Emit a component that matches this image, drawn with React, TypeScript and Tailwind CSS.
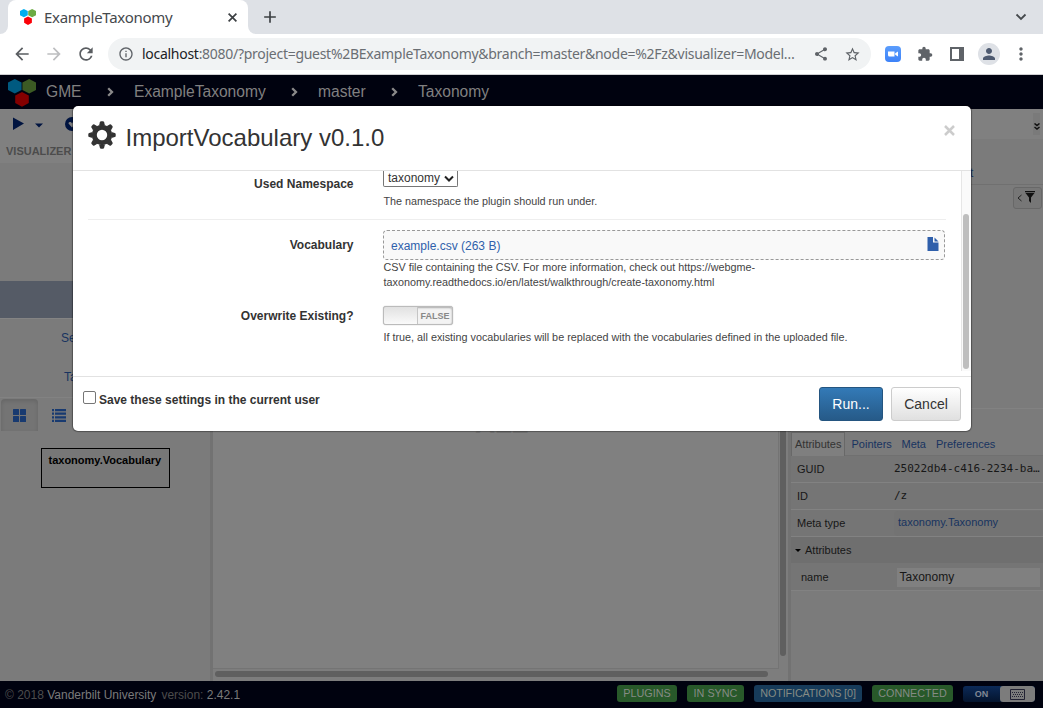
import React from "react";
import {
  MdAdd,
  MdArrowBack,
  MdArrowForward,
  MdExtension,
  MdInfoOutline,
  MdMoreVert,
  MdPerson,
  MdRefresh,
  MdShare,
  MdStarBorder,
  MdVideocam,
} from "react-icons/md";

const sans = "font-['Liberation_Sans',Arial,sans-serif]";
const noto = "font-['Noto_Sans',sans-serif]";

function Logo({ className, blue, green, red }: { className: string; blue: string; green: string; red: string }) {
  return (
    <svg className={className} viewBox="0 0 28 28">
      <path fill={blue} d="M6.800 0l6.800 3.500v7.500l-6.800 3.500L0 11V3.500z" />
      <path fill={green} d="M21.200 0L28 3.500v7.500l-6.800 3.500L14.400 11V3.500z" />
      <path fill={red} d="M14 13l6.800 3.500v7.500L14 27.800 7.200 24v-7.500z" />
    </svg>
  );
}

function BrowserChrome() {
  return (
    <div className={`${noto} shrink-0`}>
      <div className="flex h-[34px] bg-[#dee1e6]">
        <div className="flex w-2 items-end bg-white">
          <div className="h-[34px] w-2 rounded-br-lg bg-[#dee1e6]" />
        </div>
        <div className="bg-[#dee1e6]">
          <div className="flex h-[34px] w-[240px] items-center rounded-t-lg bg-white pl-3">
            <Logo className="size-4" blue="#00aeef" green="#6cab43" red="#fb0007" />
            <span className="ml-2 w-[183px] text-[15px] leading-5 tracking-[-0.280px] text-[#45494d]">ExampleTaxonomy</span>
            <svg className="ml-[0.500px] size-[9px]" viewBox="0 0 9 9" fill="none" stroke="#3c4043" strokeWidth="1.700">
              <path d="M.6.600l7.800 7.800M8.400.600L.6 8.400" />
            </svg>
          </div>
        </div>
        <div className="flex-1 bg-white">
          <div className="flex h-[34px] items-center justify-between rounded-bl-lg bg-[#dee1e6] pl-3 pr-3.5">
            <MdAdd className="size-5 text-[#3c4043]" />
            <svg className="size-4" viewBox="0 0 16 16" fill="none" stroke="#45494d" strokeWidth="1.800">
              <path d="M3.500 5.500L8 10l4.500-4.500" />
            </svg>
          </div>
        </div>
      </div>
      <div className="flex h-[41px] items-center border-b border-[#cfcfd2] bg-white">
        <MdArrowBack className="ml-3 size-5 text-[#5a5d61]" />
        <MdArrowForward className="ml-3 size-5 text-[#bdbec0]" />
        <MdRefresh className="ml-3 size-5 text-[#5a5d61]" />
        <div className="ml-3 flex h-8 w-[763px] items-center rounded-full bg-[#f1f3f4] pl-2.5">
          <MdInfoOutline className="size-4 shrink-0 text-[#5f6368]" />
          <span className="ml-2 w-[670px] whitespace-nowrap text-[14px] leading-5 tracking-[-0.280px] text-[#6a6e73]">
            <span className="text-[#202124]">localhost</span>
            :8080/?project=guest%2BExampleTaxonomy&amp;branch=master&amp;node=%2Fz&amp;visualizer=Model…
          </span>
          <MdShare className="ml-px size-4 shrink-0 text-[#5f6368]" />
          <MdStarBorder className="ml-[15px] size-[17px] shrink-0 text-[#5f6368]" />
        </div>
        <div className="ml-3.5 flex size-4 items-center justify-center rounded bg-linear-to-b from-[#5b9dfc] to-[#3d82f8] text-white">
          <svg className="h-2 w-3" viewBox="0 0 12 8" fill="white">
            <path d="M1 1.500h6.500v5H2.500A1.500 1.500 0 0 1 1 5zM8.200 3.200L11 1.500v5L8.200 4.800z" />
          </svg>
        </div>
        <MdExtension className="ml-4 size-4 text-[#5f6368]" />
        <svg className="ml-4 h-3.5 w-4" viewBox="0 0 16 14">
          <path fill="#5f6368" fillRule="evenodd" d="M1 0h14v14H1zm2 2v10h7V2z" />
        </svg>
        <div className="ml-[13px] flex size-[22px] items-center justify-center rounded-full bg-[#dee1e6]">
          <MdPerson className="size-[18px] text-[#4e5a70]" />
        </div>
        <MdMoreVert className="ml-[11px] size-5 text-[#5f6368]" />
      </div>
    </div>
  );
}

function Crumb({ width, children }: { width: string; children: React.ReactNode }) {
  return (
    <>
      <svg className="h-2.5 w-[7px]" viewBox="0 0 7 10" fill="none" stroke="#8a8a8a" strokeWidth="2.300">
        <path d="M1.200 1.200L5 5 1.200 8.800" />
      </svg>
      <span className={`ml-5 ${width}`}>{children}</span>
    </>
  );
}

function AppHeader() {
  return (
    <div className="flex h-[34px] shrink-0 items-center bg-[#00020f] pl-2 text-[15.600px] text-[#808080]">
      <Logo className="mt-0.5 size-7" blue="#005a80" green="#3b5a24" red="#840000" />
      <span className="ml-2.5 w-[61px]">GME</span>
      <Crumb width="w-[157px]">ExampleTaxonomy</Crumb>
      <Crumb width="w-[73px]">master</Crumb>
      <Crumb width="w-[90px]">Taxonomy</Crumb>
    </div>
  );
}

function AppToolbar() {
  return (
    <div className="flex h-[30px] shrink-0 items-center bg-[#808080] pl-3">
      <svg className="h-3.5 w-[54px]" viewBox="0 0 54 14">
        <path fill="#001440" d="M1 .5l11 6-11 6.500zM23 6.500h8l-4 4z" />
      </svg>
      <svg className="-ml-px size-3.5" viewBox="0 0 14 14">
        <circle cx="7" cy="7" r="7" fill="#001440" />
        <path d="M3.500 6.500c0-2 3-2 3.500 0 .5-2 3.500-2 3.500 0L7 10.500z" fill="#808080" />
      </svg>
      <div className="ml-auto mr-[3px] flex h-[22px] w-[7px] items-center justify-center bg-[#7a7a7a]">
        <svg className="mt-1 h-[7px] w-[6px]" viewBox="0 0 6 7" fill="none" stroke="#111" strokeWidth="1.500">
          <path d="M.5.5L3 2.500 5.500.5M.5 4L3 6l2.500-2" />
        </svg>
      </div>
    </div>
  );
}

function LeftPanel() {
  return (
    <div className="flex w-[210px] flex-col bg-[#7b7b7b] text-[12px] text-[#183360]">
      <div className="h-6 bg-[#808080] pl-1.5 pt-1 text-[11px] font-bold leading-4 text-[#4c4c4c]">VISUALIZER</div>
      <div className="mt-[118px] h-[37px] bg-[#555b66]" />
      <div className="flex h-[39px] items-center border-t border-[#848484] pl-[61px]">Set membership</div>
      <div className="flex h-[38px] items-center pl-16 pt-0.5">Taxonomy</div>
      <div className="mt-0.5 h-px bg-[#828282]" />
      <div className="mt-px flex h-8 items-center pl-px">
        <div className="flex h-8 w-[37px] items-center justify-center rounded-t bg-[#747474] shadow-[inset_0_2px_4px_rgba(0,0,0,.12)]">
          <svg className="size-[13px]" viewBox="0 0 13 13" fill="#183a70">
            <rect width="6" height="6" rx=".5" />
            <rect x="7" width="6" height="6" rx=".5" />
            <rect y="7" width="6" height="6" rx=".5" />
            <rect x="7" y="7" width="6" height="6" rx=".5" />
          </svg>
        </div>
        <svg className="ml-3.5 h-[13px] w-3.5" viewBox="0 0 14 13" fill="#183a70">
          <path d="M0 0h2v2.200H0zM3 0h11v2.200H3zM0 3.600h2v2.200H0zM3 3.600h11v2.200H3zM0 7.200h2v2.200H0zM3 7.200h11v2.200H3zM0 10.800h2V13H0zM3 10.800h11V13H3z" />
        </svg>
      </div>
      <div className="ml-[41px] mt-[17px] h-10 w-[129px] border border-black bg-[#777] pl-[6.500px] pt-[3px] text-[11px] font-bold leading-4 text-black">
        taxonomy.Vocabulary
      </div>
    </div>
  );
}

function Canvas() {
  return (
    <div className="flex w-[578px] flex-col border-l-[3px] border-[#727272] bg-[#7d7d7d]">
      <div className="flex h-[530px]">
        <div className="w-[566px] border-b border-r border-[#747474] bg-[#808080] pl-[262px] pt-[271px] text-[28px] font-bold leading-7 tracking-[-0.5px] text-[#727272]">
          ALL
        </div>
        <div className="ml-px h-[517px] w-1.5 rounded-full bg-[#5f5f5f]" />
      </div>
      <div className="ml-0.5 mt-0.5 h-1.5 w-[553px] rounded-full bg-[#5f5f5f]" />
    </div>
  );
}

function PropertyRow({ label, children }: { label: string; children: React.ReactNode }) {
  return (
    <div className="flex h-[27px] items-center border-b border-[#828282] pl-1.5">
      <span className="w-[97px]">{label}</span>
      {children}
    </div>
  );
}

function RightPanel() {
  return (
    <div className="flex flex-1 flex-col border-l-[3px] border-[#727272] bg-[#7b7b7b] text-[11px] text-[#171717]">
      <div className="flex h-[46px] items-end border-b border-[#707070] pb-[3px] pl-[179px] text-[12px] leading-4 text-[#183360]">t</div>
      <div className="ml-auto mr-px mt-0.5 flex h-[22px] w-[29px] items-center rounded-[3px] border border-[#686868] bg-[#777] pl-[3px]">
        <svg className="h-2 w-[5px]" viewBox="0 0 5 8" fill="none" stroke="#222">
          <path d="M4.500 1L1 4l3.500 3" />
        </svg>
        <svg className="-mt-0.5 ml-[3px] h-3 w-2.5" viewBox="0 0 10 12" fill="#111">
          <path d="M0 0h10v1.200H0zM.5 2h9L6 6.500V12L4 10V6.500z" />
        </svg>
      </div>
      <div className="mt-[199px] h-px bg-[#828282]" />
      <div className="mt-[23px] flex h-6 border-b border-[#707070] text-[#183360]">
        <div className="-mb-px w-[54px] border border-b-0 border-[#686868] bg-[#7f7f7f] pl-[3px] pt-[3px] leading-4 text-[#333]">Attributes</div>
        <span className="w-[50px] pl-[6.500px] pt-1 leading-4">Pointers</span>
        <span className="w-[35px] pl-[6.500px] pt-1 leading-4">Meta</span>
        <span className="pl-1.5 pt-1 leading-4">Preferences</span>
      </div>
      <div className="bg-[#757575]">
        <PropertyRow label="GUID">
          <span className="pt-px font-['DejaVu_Sans_Mono',monospace]">25022db4-c416-2234-ba…</span>
        </PropertyRow>
        <PropertyRow label="ID">
          <span className="pt-px font-['DejaVu_Sans_Mono',monospace]">/z</span>
        </PropertyRow>
        <PropertyRow label="Meta type">
          <span className="h-[25px] flex-1 rounded bg-[#737373] pl-1 pt-[3px] leading-4 text-[#183360]">taxonomy.Taxonomy</span>
        </PropertyRow>
        <div className="flex h-[26px] items-center bg-[#6f6f6f] pl-1">
          <svg className="mr-1 h-[3px] w-[6px]" viewBox="0 0 6 3">
            <path d="M0 0h6L3 3z" />
          </svg>
          Attributes
        </div>
        <div className="flex h-7 items-center border-b border-[#828282] pl-2.5 pt-px">
          <span className="w-[96px]">name</span>
          <span className="h-[19px] w-[143px] bg-[#808080] pl-[2.500px] text-[12px] leading-[19px]">Taxonomy</span>
        </div>
      </div>
    </div>
  );
}

function Badge({ className, children }: { className: string; children: React.ReactNode }) {
  return (
    <span className={`flex h-[17px] justify-center whitespace-nowrap rounded-[3px] text-[10.800px] leading-[16px] text-[#858b85] ${className}`}>
      {children}
    </span>
  );
}

function AppFooter() {
  return (
    <div className="flex h-[27px] shrink-0 items-center bg-[#00020f] pl-[5px] text-[12px] text-[#4c4c4c]">
      <span className="whitespace-pre">© 2018 </span>
      <span className="text-[#7a7a7a]">Vanderbilt University</span>
      <span className="ml-[5px] whitespace-pre">version: </span>
      <span className="text-[#7a7a7a]">2.42.1</span>
      <div className="-mt-0.5 ml-auto mr-2 flex h-[17px] items-center">
        <Badge className="w-[60px] bg-[#28592a]">PLUGINS</Badge>
        <Badge className="ml-2.5 w-[57px] bg-[#28592a]">IN SYNC</Badge>
        <Badge className="ml-2.5 w-[108px] bg-[#173b5a] tracking-[-0.120px]">NOTIFICATIONS [0]</Badge>
        <Badge className="ml-2.5 w-[81px] bg-[#28592a]">CONNECTED</Badge>
        <div className="ml-2.5 mt-px flex h-4 w-[72px] overflow-hidden rounded-[3px] bg-linear-to-b from-[#0c2a58] to-[#04142e]">
          <span className="flex w-[37px] items-center justify-center pt-px text-[9px] font-bold text-[#818894]">ON</span>
          <span className="flex flex-1 items-center justify-center rounded-[3px] bg-[#7c7c7c]">
            <svg className="h-[11px] w-[15px]" viewBox="0 0 15 11" fill="none" stroke="#223">
              <path d="M.5.5h14v10H.5z" />
              <path strokeDasharray="1 1" d="M2 3.500h11M3 5.500h10M2 7.500h11" />
            </svg>
          </span>
        </div>
      </div>
    </div>
  );
}

function Cog() {
  return (
    <svg className="size-7" viewBox="-14 -14 28 28" fill="#333">
      <path fillRule="evenodd" d="M0-10.200A10.200 10.200 0 1 1 0 10.200 10.200 10.200 0 1 1 0-10.200zM0-5.200A5.200 5.200 0 1 0 0 5.200 5.200 5.200 0 1 0 0-5.200z" />
      {[0, 45, 90, 135, 180, 225, 270, 315].map((angle) => (
        <path key={angle} transform={`rotate(${angle})`} d="M-3-9.500L-2.100-12.800Q-1.800-13.700-1-13.700H1Q1.800-13.700 2.100-12.800L3-9.500z" />
      ))}
    </svg>
  );
}

function FormRow({ label, className, children }: { label: string; className: string; children: React.ReactNode }) {
  return (
    <div className={`flex ${className}`}>
      <div className="w-[265.500px] shrink-0 pt-[5px] text-right text-[12px] font-bold leading-5">{label}</div>
      <div className="ml-[29.500px] w-[562px] text-[10.800px] leading-[15px] text-[#444]">{children}</div>
    </div>
  );
}

function PluginDialog() {
  return (
    <div className="absolute left-[73px] top-[106px] flex h-[325px] w-[898px] flex-col overflow-hidden rounded-[5px] bg-white text-[#333] shadow-[0_0_1px_1px_rgba(0,0,0,.35)]">
      <div className="flex h-[65px] shrink-0 border-b border-[#e2e2e2] pl-[15px] pr-3.5 pt-[15px]">
        <Cog />
        <h1 className="ml-[9.500px] mt-0.5 text-[24px] leading-[30px]">ImportVocabulary v0.1.0</h1>
        <svg className="ml-auto mr-0.5 mt-[3.500px] size-[11px]" viewBox="0 0 11 11" stroke="#ccc" strokeWidth="2.500">
          <path d="M1 1l9 9M10 1l-9 9" />
        </svg>
      </div>
      <div className="flex h-[205px] shrink-0">
        <div className="h-[205px] w-[888px] overflow-hidden pl-[15px]">
          <FormRow label="Used Namespace" className="-mt-[2px] h-[51px] w-[858px] border-b border-[#eee]">
            <div className="flex h-[18px] w-[75px] items-center rounded-b-[2px] border border-t-0 border-[#767676] pl-1 pt-px text-[12px] text-[#333]">
              taxonomy
              <svg className="ml-1 h-[7px] w-2.5" viewBox="0 0 10 7" fill="none" stroke="#222" strokeWidth="2">
                <path d="M1 1.500l4 4 4-4" />
              </svg>
            </div>
            <p className="mt-[7px] pl-[0.500px]">The namespace the plugin should run under.</p>
          </FormRow>
          <FormRow label="Vocabulary" className="mt-2.5 h-[71px]">
            <div className="flex h-[30px] items-center justify-between rounded border border-dashed border-[#999] bg-[#f9f9f9] pl-[7px] pr-[5px] text-[12px] text-[#2f5fab]">
              <span className="pt-0.5">example.csv (263 B)</span>
              <svg className="-mt-0.5 h-3.5 w-3" viewBox="0 0 12 14" fill="#2f5fab">
                <path d="M.5 0H6v5.500h5.500V14H.5zM7.500.5l4 4h-4z" />
              </svg>
            </div>
            <p className="w-[400px] pl-[0.500px]">CSV file containing the CSV. For more information, check out https://webgme-taxonomy.readthedocs.io/en/latest/walkthrough/create-taxonomy.html</p>
          </FormRow>
          <FormRow label="Overwrite Existing?" className="">
            <div className="mt-[5px] flex h-[19px] w-[70px] rounded-[3px] border border-[#bbb] bg-[#f3f3f3] text-[9px] font-bold text-[#888] shadow-[inset_0_1px_2px_rgba(0,0,0,.3),0_0_1px_rgba(0,0,0,.4)]">
              <div className="w-[34px] rounded-l-[2px] border-r border-[#c5c5c5] bg-linear-to-b from-[#e1e1e1] to-[#fafafa]" />
              <span className="flex-1 text-center leading-[18px]">FALSE</span>
            </div>
            <p className="mt-[5px] pl-[0.500px]">If true, all existing vocabularies will be replaced with the vocabularies defined in the uploaded file.</p>
          </FormRow>
        </div>
        <div className="h-[200px] w-2.5 border-l border-[#e6e6e6] bg-[#fafafa] pl-px pt-[43px]">
          <div className="h-[155px] w-1.5 rounded-full bg-[#bebebe]" />
        </div>
      </div>
      <div className="flex flex-1 border-t border-[#e2e2e2] pl-2.5 pr-2.5 pt-2.5">
        <div className="mt-[4px] size-[13px] rounded-[2px] border border-[#767676]" />
        <span className="ml-[3px] mt-[3px] text-[12px] font-bold leading-5">Save these settings in the current user</span>
        <div className="ml-auto flex gap-2 text-[14px]">
          <button className="h-[34px] w-16 rounded-[3px] border border-[#245580] bg-linear-to-b from-[#337ab7] to-[#265a88] text-white">Run...</button>
          <button className="h-[34px] w-[70px] rounded-[3px] border border-[#ccc] bg-linear-to-b from-white to-[#e0e0e0]">Cancel</button>
        </div>
      </div>
    </div>
  );
}

export default function App() {
  return (
    <div className={`${sans} relative flex h-[708px] w-[1043px] flex-col overflow-hidden`}>
      <BrowserChrome />
      <AppHeader />
      <AppToolbar />
      <div className="flex h-[542px] shrink-0">
        <LeftPanel />
        <Canvas />
        <RightPanel />
      </div>
      <AppFooter />
      <PluginDialog />
    </div>
  );
}
